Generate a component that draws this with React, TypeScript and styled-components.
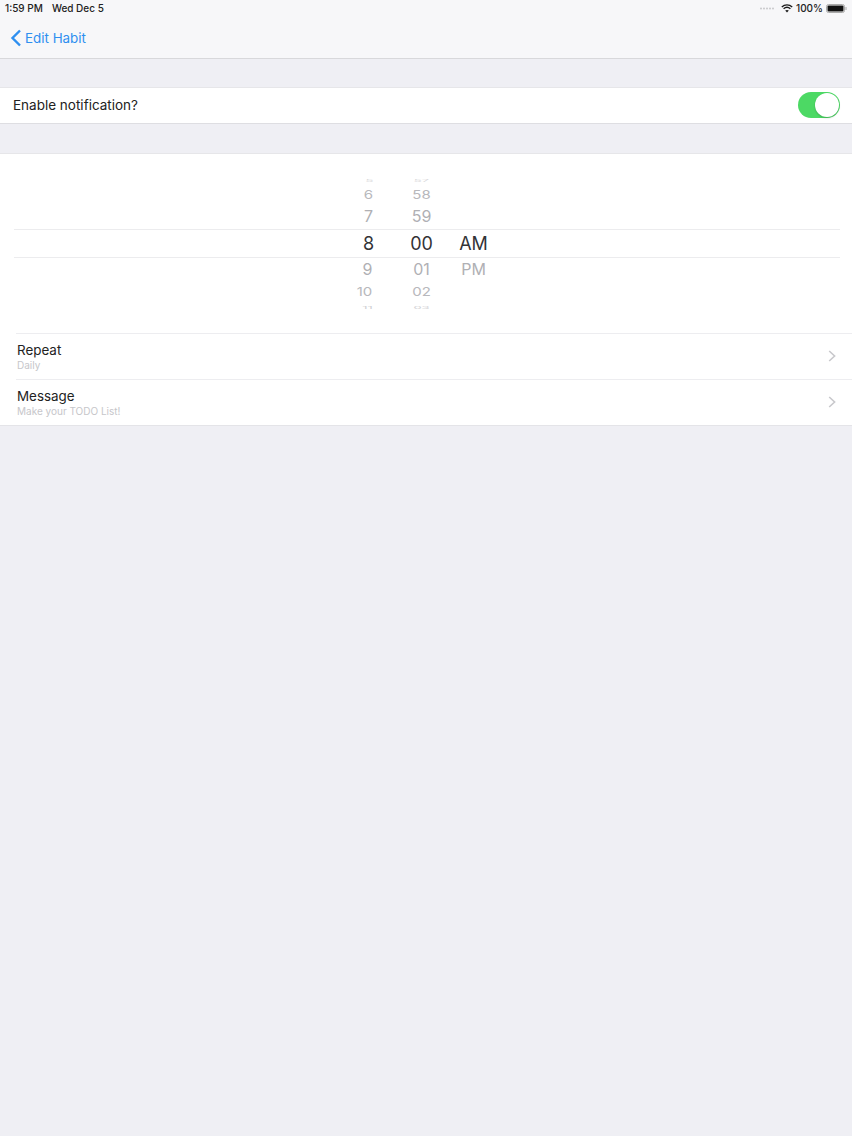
import styled, { createGlobalStyle } from 'styled-components';

const GlobalStyle = createGlobalStyle`
  html, body {
    margin: 0;
    padding: 0;
    background: #efeff4;
    font-family: Inter, "Liberation Sans", sans-serif;
    color: #111;
  }
`;

const Page = styled.div`
  min-height: 1136px;
  display: flex;
  flex-direction: column;
  background: #efeff4;
`;

const Header = styled.header`
  height: 58px;
  background: #f7f7f9;
  border-bottom: 1px solid #d8d8db;
  display: flex;
  flex-direction: column;
`;

const StatusBar = styled.div`
  height: 16px;
  padding: 0 5px;
  display: flex;
  align-items: center;
  justify-content: space-between;
  font-size: 10px;
  font-weight: 500;
  color: #222;
`;

const StatusGroup = styled.div<{ $gap: number }>`
  display: flex;
  align-items: center;
  gap: ${(p) => p.$gap}px;
`;

const NavBar = styled.div`
  flex: 1;
  display: flex;
  align-items: center;
  padding: 0 0 0 10px;
  gap: 3px;
  margin-top: 1px;
  color: #2e8ff0;
  font-size: 13.4px;
`;

const ToggleRow = styled.div`
  height: 34px;
  margin-top: 28px;
  padding: 0 12px 1px 13px;
  background: #fff;
  border-top: 1px solid #e6e6e9;
  border-bottom: 1px solid #dedee2;
  display: flex;
  align-items: center;
  justify-content: space-between;
  font-size: 13.5px;
  color: #222;
`;

const Switch = styled.div`
  width: 42px;
  height: 26px;
  border-radius: 13px;
  background: #4cd964;
  display: flex;
  justify-content: flex-end;
  padding: 1px;
  box-sizing: border-box;
`;

const Knob = styled.div`
  width: 24px;
  height: 24px;
  border-radius: 50%;
  background: #fff;
  box-shadow: 0 1px 2px rgba(0, 0, 0, 0.2);
`;

const Card = styled.section`
  margin-top: 29px;
  background: #fff;
  border-top: 1px solid #e6e6e9;
  border-bottom: 1px solid #e4e4e8;
`;

const Picker = styled.div`
  position: relative;
  height: 179px;
  padding: 21px 9px 0 0;
  box-sizing: border-box;
  display: flex;
  justify-content: center;
`;

const SelectionBand = styled.div`
  position: absolute;
  top: 75px;
  left: 14px;
  right: 12px;
  height: 27px;
  border-top: 1px solid #ececee;
  border-bottom: 1px solid #ececee;
`;

const Column = styled.div`
  width: 52px;
  height: 134px;
  overflow: hidden;
  display: flex;
  flex-direction: column;
`;

const WheelItem = styled.div<{ $height: number; $squash: number; $color: string; $size: number; $shift: number }>`
  height: ${(p) => p.$height}px;
  flex: none;
  display: flex;
  align-items: center;
  justify-content: center;
  font-size: ${(p) => p.$size}px;
  color: ${(p) => p.$color};
  transform: translateX(${(p) => p.$shift}px) scaleY(${(p) => p.$squash});
`;

const ListRow = styled.div`
  height: 46px;
  margin-left: 16px;
  padding: 0 16px 2px 1px;
  box-sizing: border-box;
  border-top: 1px solid #ededf0;
  display: flex;
  align-items: center;
  justify-content: space-between;
`;

const RowText = styled.div`
  display: flex;
  flex-direction: column;
  height: 30px;
`;

const RowTitle = styled.div`
  font-size: 13.4px;
  line-height: 18px;
  color: #222;
`;

const RowSubtitle = styled.div`
  font-size: 10px;
  line-height: 12px;
  color: #c6c6ca;
`;

const slots = [
  { height: 10, squash: 0.3, color: '#d8d8da', size: 13 },
  { height: 18, squash: 0.8, color: '#b8b8bc', size: 15 },
  { height: 26, squash: 0.95, color: '#b0b0b4', size: 16 },
  { height: 28, squash: 1, color: '#333336', size: 18 },
  { height: 24, squash: 0.95, color: '#b0b0b4', size: 16 },
  { height: 20, squash: 0.8, color: '#b8b8bc', size: 15 },
  { height: 12, squash: 0.3, color: '#d0d0d3', size: 13 },
];

const wheels = [
  { values: ['5', '6', '7', '8', '9', '10', '11'], shifts: [0, -1, -1, -1, -2, -5, -2] },
  { values: ['57', '58', '59', '00', '01', '02', '03'], shifts: [0, 0, 0, 0, 0, 0, 0] },
  { values: ['', '', '', 'AM', 'PM', '', ''], shifts: [0, 0, 0, 0, 0, 0, 0] },
];

function Chevron() {
  return (
    <svg width="8" height="12" viewBox="0 0 8 12" fill="none">
      <path d="M1.2 1 L6.6 6 L1.2 11" stroke="#c8c8cc" strokeWidth="1.6" />
    </svg>
  );
}

export default function App() {
  return (
    <Page>
      <GlobalStyle />
      <Header>
        <StatusBar>
          <StatusGroup $gap={9}>
            <span>1:59 PM</span>
            <span>Wed Dec 5</span>
          </StatusGroup>
          <StatusGroup $gap={3}>
            <svg width="16" height="4" viewBox="0 0 16 4" style={{ marginRight: 2 }}>
              {[1, 4, 7, 10, 13].map((x) => (
                <circle key={x} cx={x} cy="2.5" r="1" fill="#c8c8cb" />
              ))}
            </svg>
            <svg width="12" height="9" viewBox="0 0 12 9" fill="none" stroke="#1a1a1a">
              <path d="M0.8 3 C3.8 0.2 8.2 0.2 11.2 3" strokeWidth="1.4" />
              <path d="M2.6 4.8 C4.6 3 7.4 3 9.4 4.8" strokeWidth="1.4" />
              <path d="M6 8.6 L4.2 6.6 C5.2 5.8 6.8 5.8 7.8 6.6 Z" fill="#1a1a1a" stroke="none" />
            </svg>
            <span>100%</span>
            <svg width="21" height="9" viewBox="0 0 21 9">
              <rect x="0.5" y="0.5" width="18" height="8" rx="2" fill="#fff" stroke="#aaa" />
              <rect x="1.5" y="1.5" width="16" height="6" rx="1" fill="#111" />
              <rect x="19.5" y="3" width="1" height="3" fill="#aaa" />
            </svg>
          </StatusGroup>
        </StatusBar>
        <NavBar>
          <svg width="12" height="18" viewBox="0 0 12 18" fill="none">
            <path d="M10 1.5 L2.5 9 L10 16.5" stroke="#2e8ff0" strokeWidth="2.4" />
          </svg>
          <span>Edit Habit</span>
        </NavBar>
      </Header>

      <ToggleRow>
        <span>Enable notification?</span>
        <Switch>
          <Knob />
        </Switch>
      </ToggleRow>

      <Card>
        <Picker>
          <SelectionBand />
          {wheels.map((wheel) => (
            <Column key={wheel.values[3]}>
              {wheel.values.map((value, i) => (
                <WheelItem
                  key={i}
                  $height={slots[i].height}
                  $squash={slots[i].squash}
                  $color={slots[i].color}
                  $size={slots[i].size}
                  $shift={wheel.shifts[i]}
                >
                  {value}
                </WheelItem>
              ))}
            </Column>
          ))}
        </Picker>
        <ListRow>
          <RowText>
            <RowTitle>Repeat</RowTitle>
            <RowSubtitle>Daily</RowSubtitle>
          </RowText>
          <Chevron />
        </ListRow>
        <ListRow>
          <RowText>
            <RowTitle>Message</RowTitle>
            <RowSubtitle>Make your TODO List!</RowSubtitle>
          </RowText>
          <Chevron />
        </ListRow>
      </Card>
    </Page>
  );
}
